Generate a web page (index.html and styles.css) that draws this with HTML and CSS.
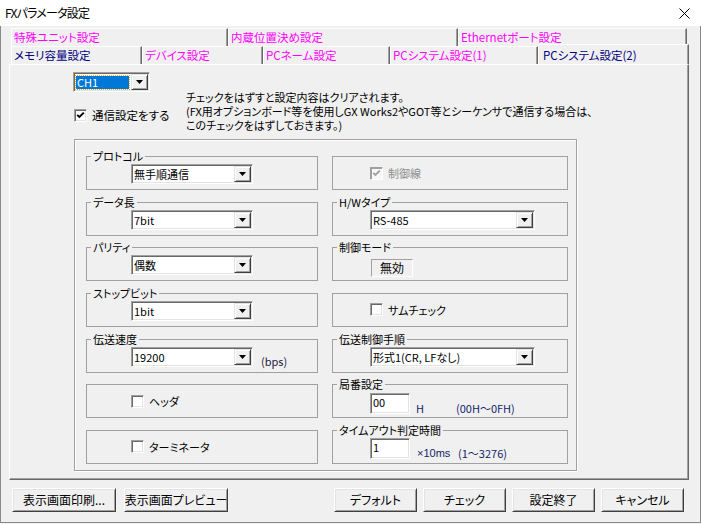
FILE: index.html
```html
<!DOCTYPE html>
<html lang="ja">
<head>
<meta charset="utf-8">
<title>FXパラメータ設定</title>
<link rel="stylesheet" href="styles.css">
</head>
<body>
<div class="window">
  <div class="titlebar">
    <span class="title">FXパラメータ設定</span>
    <svg class="close" width="11" height="11" viewBox="0 0 11 11"><path d="M0.5 0.5L10.5 10.5M10.5 0.5L0.5 10.5" stroke="#000" stroke-width="1" fill="none"/></svg>
  </div>

  <div class="tabs">
    <div class="tabrow">
      <div class="tab w217">特殊ユニット設定</div>
      <div class="tab w230">内蔵位置決め設定</div>
      <div class="tab w229">Ethernetポート設定</div>
    </div>
    <div class="tabrow">
      <div class="tab w131 navy">メモリ容量設定</div>
      <div class="tab w121">デバイス設定</div>
      <div class="tab w127">PCネーム設定</div>
      <div class="tab w148">PCシステム設定(1)</div>
      <div class="tab w151 navy active">PCシステム設定(2)</div>
    </div>
  </div>

  <div class="panel">
    <div class="top">
      <div class="topleft">
        <div class="combo ch">
          <div class="val"><span class="sel">CH1</span></div>
          <div class="dd"><svg width="7" height="4" viewBox="0 0 7 4"><path d="M0 0H7L3.5 4Z" fill="#000"/></svg></div>
        </div>
        <div class="chk main">
          <span class="box"><svg width="9" height="9" viewBox="0 0 9 9"><path d="M1.2 3.8L3.4 6L7.8 1.6" stroke="#000" stroke-width="1.9" fill="none"/></svg></span>
          <span>通信設定をする</span>
        </div>
      </div>
      <div class="note">
        <div class="line">チェックをはずすと設定内容はクリアされます。</div>
        <div class="line">(FX用オプションボード等を使用しGX Works2やGOT等とシーケンサで通信する場合は、</div>
        <div class="line">このチェックをはずしておきます。)</div>
      </div>
    </div>

    <div class="bigbox">
      <div class="grid">
        <div class="grp lc">
          <span class="legend">プロトコル</span>
          <div class="combo lw"><div class="val">無手順通信</div><div class="dd"><svg width="7" height="4" viewBox="0 0 7 4"><path d="M0 0H7L3.5 4Z" fill="#000"/></svg></div></div>
        </div>
        <div class="grp rc mid">
          <div class="chk dis">
            <span class="box"><svg width="9" height="9" viewBox="0 0 9 9"><path d="M1.2 3.8L3.4 6L7.8 1.6" stroke="#a0a0a0" stroke-width="1.9" fill="none"/></svg></span>
            <span>制御線</span>
          </div>
        </div>

        <div class="grp lc">
          <span class="legend">データ長</span>
          <div class="combo lw"><div class="val">7bit</div><div class="dd"><svg width="7" height="4" viewBox="0 0 7 4"><path d="M0 0H7L3.5 4Z" fill="#000"/></svg></div></div>
        </div>
        <div class="grp rc">
          <span class="legend">H/Wタイプ</span>
          <div class="combo rw"><div class="val">RS-485</div><div class="dd"><svg width="7" height="4" viewBox="0 0 7 4"><path d="M0 0H7L3.5 4Z" fill="#000"/></svg></div></div>
        </div>

        <div class="grp lc">
          <span class="legend">パリティ</span>
          <div class="combo lw"><div class="val">偶数</div><div class="dd"><svg width="7" height="4" viewBox="0 0 7 4"><path d="M0 0H7L3.5 4Z" fill="#000"/></svg></div></div>
        </div>
        <div class="grp rc st">
          <span class="legend">制御モード</span>
          <div class="static">無効</div>
        </div>

        <div class="grp lc">
          <span class="legend">ストップビット</span>
          <div class="combo lw"><div class="val">1bit</div><div class="dd"><svg width="7" height="4" viewBox="0 0 7 4"><path d="M0 0H7L3.5 4Z" fill="#000"/></svg></div></div>
        </div>
        <div class="grp rc mid">
          <div class="chk">
            <span class="box"></span>
            <span>サムチェック</span>
          </div>
        </div>

        <div class="grp lc">
          <span class="legend">伝送速度</span>
          <div class="combo lw"><div class="val">19200</div><div class="dd"><svg width="7" height="4" viewBox="0 0 7 4"><path d="M0 0H7L3.5 4Z" fill="#000"/></svg></div></div>
          <span class="bps">(bps)</span>
        </div>
        <div class="grp rc">
          <span class="legend">伝送制御手順</span>
          <div class="combo rw"><div class="val">形式1(CR, LFなし)</div><div class="dd"><svg width="7" height="4" viewBox="0 0 7 4"><path d="M0 0H7L3.5 4Z" fill="#000"/></svg></div></div>
        </div>

        <div class="grp lc mid">
          <div class="chk">
            <span class="box"></span>
            <span>ヘッダ</span>
          </div>
        </div>
        <div class="grp rc ed1">
          <span class="legend">局番設定</span>
          <div class="edit">00</div>
          <span class="unit u1">H</span>
          <span class="unit">(00H〜0FH)</span>
        </div>

        <div class="grp lc mid">
          <div class="chk">
            <span class="box"></span>
            <span>ターミネータ</span>
          </div>
        </div>
        <div class="grp rc">
          <span class="legend">タイムアウト判定時間</span>
          <div class="edit">1</div>
          <span class="unit u2">×10ms</span>
          <span class="unit">(1〜3276)</span>
        </div>
      </div>
    </div>
  </div>

  <div class="buttons">
    <div class="bgroup">
      <div class="btn wide">表示画面印刷...</div>
      <div class="btn wide">表示画面プレビュー</div>
    </div>
    <div class="bgroup right">
      <div class="btn">デフォルト</div>
      <div class="btn">チェック</div>
      <div class="btn">設定終了</div>
      <div class="btn">キャンセル</div>
    </div>
  </div>
</div>
</body>
</html>
```

FILE: styles.css
```css
html, body {
  margin: 0;
  padding: 0;
}
body {
  width: 701px;
  height: 524px;
  overflow: hidden;
  background: #f0f0f0;
  font-family: "Noto Sans CJK JP", "Noto Sans", sans-serif;
  font-size: 11px;
  line-height: 14px;
  color: #000;
  font-feature-settings: "palt" 1;
}
.window {
  box-sizing: border-box;
  width: 701px;
  height: 523px;
  border: 1px solid #8a8a8a;
  border-top: none;
  background: #f0f0f0;
}
.titlebar {
  height: 26px;
  margin: 0 -1px;
  background: #fff;
  display: flex;
  align-items: center;
  justify-content: space-between;
  padding: 0 11px 0 5px;
}
.title {
  font-size: 12px;
  line-height: 16px;
  letter-spacing: -0.8px;
}
.close {
  display: block;
}

/* tabs */
.tabs {
  margin: 2px 0 0 10px;
}
.tabrow {
  display: flex;
  height: 18px;
}
.tab {
  box-sizing: border-box;
  height: 18px;
  border-top: 1px solid #fff;
  border-left: 1px solid #fff;
  border-right: 1px solid #696969;
  box-shadow: inset -1px 0 0 #a0a0a0;
  padding: 1px 0 0 2px;
  font-size: 11.5px;
  color: #ff00ff;
  white-space: nowrap;
  overflow: hidden;
}
.tab.navy { color: #000080; }
.tab.active {
  height: 20px;
  margin-top: -2px;
  padding-top: 3px;
  padding-left: 4px;
  background: #f0f0f0;
  position: relative;
  z-index: 1;
}
.w217 { width: 217px; }
.w230 { width: 230px; }
.w229 { width: 229px; }
.w131 { width: 131px; }
.w121 { width: 121px; }
.w127 { width: 127px; }
.w148 { width: 148px; }
.w151 { width: 151px; }

/* panel */
.panel {
  box-sizing: border-box;
  width: 680px;
  height: 416px;
  margin-left: 8px;
  border: 1px solid;
  border-color: #fff #696969 #696969 #fff;
  box-shadow: inset -1px -1px 0 #a0a0a0;
}
.top {
  height: 74px;
  display: flex;
  padding-left: 63px;
}
.topleft {
  width: 113px;
  padding-top: 7px;
}
.note {
  padding-top: 25px;
  white-space: nowrap;
}
.note .line {
  height: 14px;
}

/* combo */
.combo {
  box-sizing: border-box;
  display: flex;
  height: 20px;
  padding: 1px;
  background: #fff;
  border: 1px solid;
  border-color: #a0a0a0 #fff #fff #a0a0a0;
  box-shadow: inset 1px 1px 0 #696969, inset -1px -1px 0 #e3e3e3;
}
.combo .val {
  flex: 1;
  line-height: 16px;
  padding-left: 1px;
  white-space: nowrap;
  overflow: hidden;
}
.combo .dd {
  box-sizing: border-box;
  width: 17px;
  height: 16px;
  background: #f0f0f0;
  border: 1px solid;
  border-color: #e3e3e3 #404040 #404040 #e3e3e3;
  box-shadow: inset 1px 1px 0 #fff, inset -1px -1px 0 #a0a0a0;
  display: flex;
  align-items: center;
  justify-content: center;
}
.combo .dd svg { display: block; }
.combo.ch { width: 77px; }
.combo.ch .val { padding: 2px 2px 0 1px; }
.combo .sel {
  display: block;
  height: 13px;
  line-height: 13px;
  background: #0078d7;
  color: #fff;
  padding-left: 1px;
  outline: 1px dotted #ffb000;
  outline-offset: 0;
}
.combo.lw { width: 122px; }
.combo.rw { width: 165px; }

/* checkbox */
.chk {
  display: flex;
  align-items: center;
  white-space: nowrap;
}
.chk .box {
  box-sizing: border-box;
  width: 13px;
  height: 13px;
  margin-right: 5px;
  background: #fff;
  border: 1px solid;
  border-color: #a0a0a0 #fff #fff #a0a0a0;
  box-shadow: inset 1px 1px 0 #696969, inset -1px -1px 0 #e3e3e3;
  display: flex;
  align-items: center;
  justify-content: center;
}
.chk .box svg { display: block; }
.chk.main {
  margin-top: 16px;
  margin-left: 1px;
  font-size: 11.5px;
}
.chk.dis { color: #8d8d8d; }
.chk.dis .box {
  background: #f7f7f7;
  box-shadow: inset 1px 1px 0 #a0a0a0;
}

/* big box */
.bigbox {
  box-sizing: border-box;
  width: 503px;
  height: 332px;
  margin-left: 64px;
  border: 1px solid #a0a0a0;
  box-shadow: 1px 1px 0 #fff, inset 1px 1px 0 #fff;
  padding: 16px 0 0 11px;
}
.grid {
  display: grid;
  grid-template-columns: 232px 236px;
  grid-auto-rows: 34px;
  column-gap: 14px;
  row-gap: 11.67px;
}
.grp {
  position: relative;
  box-sizing: border-box;
  border: 1px solid #a0a0a0;
  display: flex;
  align-items: flex-start;
  padding-top: 7px;
}
.grp.lc { padding-left: 44px; }
.grp.rc { padding-left: 37px; }
.grp.mid {
  align-items: center;
  padding-top: 0;
}
.grp.st { padding-top: 11px; }
.grp.ed1 { padding-top: 8px; }
.legend {
  position: absolute;
  top: -8px;
  left: 4px;
  padding: 0 2px;
  background: #f0f0f0;
  white-space: nowrap;
}
.bps {
  margin: 7px 0 0 8px;
  color: #1a1a40;
}
.static {
  box-sizing: border-box;
  width: 42px;
  height: 18px;
  margin-left: 1px;
  border: 1px solid;
  border-color: #a0a0a0 #fff #fff #a0a0a0;
  text-align: center;
  line-height: 16px;
  font-size: 12px;
}
.edit {
  box-sizing: border-box;
  width: 40px;
  height: 21px;
  padding: 1px 0 0 2px;
  background: #fff;
  border: 1px solid;
  border-color: #a0a0a0 #fff #fff #a0a0a0;
  box-shadow: inset 1px 1px 0 #696969, inset -1px -1px 0 #e3e3e3;
  line-height: 14px;
}
.unit {
  margin-top: 8px;
  color: #14246a;
  white-space: nowrap;
}
.unit.u1 {
  width: 40px;
  margin-left: 6px;
}
.unit.u2 {
  width: 41px;
  margin-left: 7px;
  font-family: "Liberation Sans", "Noto Sans CJK JP", sans-serif;
}

/* buttons */
.buttons {
  display: flex;
  margin-top: 8px;
  padding-left: 11px;
}
.bgroup {
  display: flex;
  gap: 8px;
}
.bgroup.right {
  gap: 6px;
  margin-left: 106px;
}
.btn {
  box-sizing: border-box;
  width: 83px;
  height: 24px;
  border: 1px solid;
  border-color: #fff #404040 #404040 #fff;
  box-shadow: inset 1px 1px 0 #e3e3e3, inset -1px -1px 0 #a0a0a0;
  display: flex;
  align-items: center;
  justify-content: center;
  white-space: nowrap;
  font-size: 12px;
}
.btn.wide { width: 104px; }
```
